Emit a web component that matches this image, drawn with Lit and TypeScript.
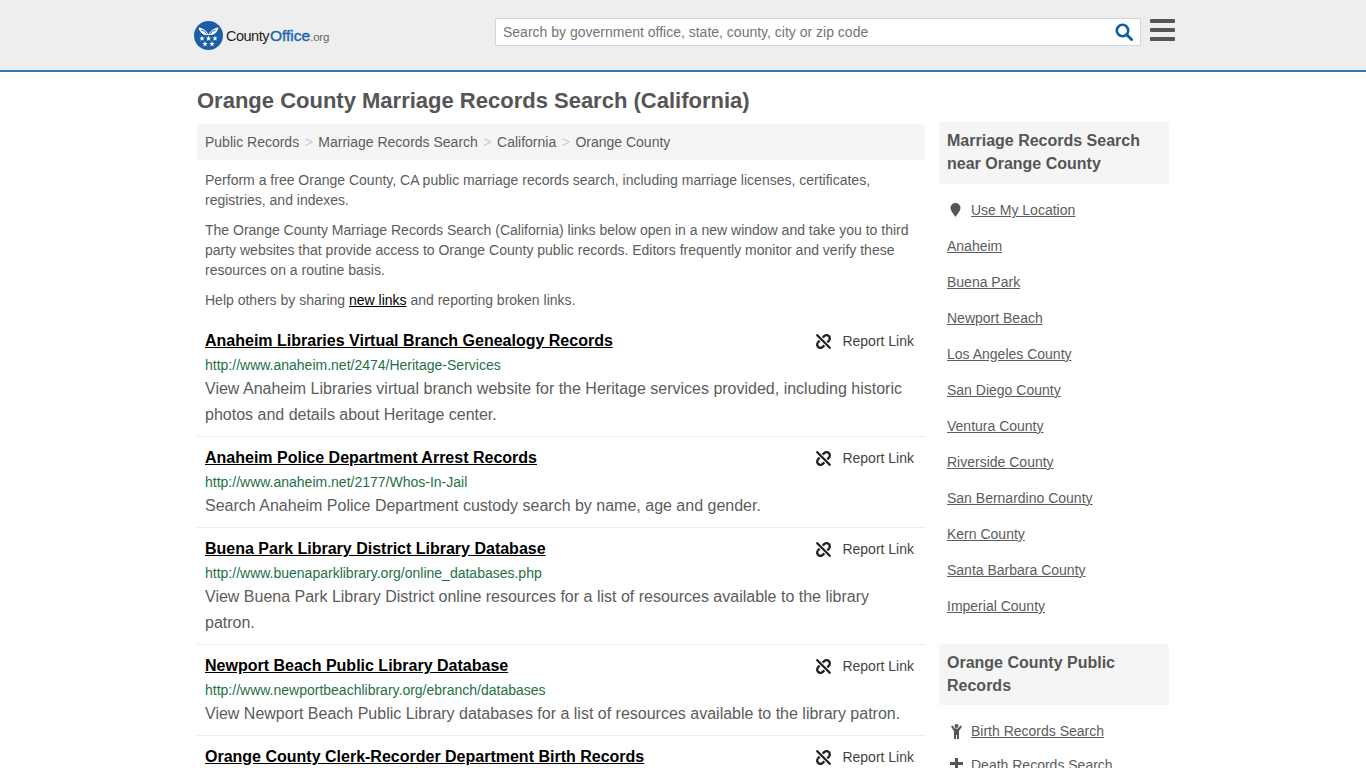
import { LitElement, html, css, svg } from "lit";
import { customElement } from "lit/decorators.js";

const UNLINK = "M304.083 405.907c4.686 4.686 4.686 12.284 0 16.971l-44.674 44.674c-59.263 59.262-155.693 59.266-214.961 0-59.264-59.265-59.264-155.696 0-214.96l44.675-44.675c4.686-4.686 12.284-4.686 16.971 0l39.598 39.598c4.686 4.686 4.686 12.284 0 16.971l-44.675 44.674c-28.072 28.073-28.072 73.75 0 101.823 28.072 28.072 73.75 28.073 101.824 0l44.674-44.674c4.686-4.686 12.284-4.686 16.971 0l39.597 39.598zm-56.568-260.216c4.686 4.686 12.284 4.686 16.971 0l44.674-44.674c28.072-28.075 73.75-28.073 101.824 0 28.072 28.073 28.072 73.75 0 101.823l-44.675 44.674c-4.686 4.686-4.686 12.284 0 16.971l39.598 39.598c4.686 4.686 12.284 4.686 16.971 0l44.675-44.675c59.265-59.265 59.265-155.695 0-214.96-59.266-59.264-155.695-59.264-214.961 0l-44.674 44.674c-4.686 4.686-4.686 12.284 0 16.971l39.597 39.598zm234.828 359.28l22.627-22.627c9.373-9.373 9.373-24.569 0-33.941L63.598 7.029c-9.373-9.373-24.569-9.373-33.941 0L7.029 29.657c-9.373 9.373-9.373 24.569 0 33.941l441.373 441.373c9.373 9.372 24.569 9.372 33.941 0z";

const star = (cx: number, cy: number, r: number) => {
  const pts: string[] = [];
  for (let i = 0; i < 10; i++) {
    const a = -Math.PI / 2 + (i * Math.PI) / 5;
    const q = i % 2 ? r * 0.42 : r;
    pts.push(`${(cx + q * Math.cos(a)).toFixed(2)},${(cy + q * Math.sin(a)).toFixed(2)}`);
  }
  return svg`<polygon points=${pts.join(" ")} fill="#fff"></polygon>`;
};

const results = [
  ["Anaheim Libraries Virtual Branch Genealogy Records", "http://www.anaheim.net/2474/Heritage-Services", "View Anaheim Libraries virtual branch website for the Heritage services provided, including historic photos and details about Heritage center."],
  ["Anaheim Police Department Arrest Records", "http://www.anaheim.net/2177/Whos-In-Jail", "Search Anaheim Police Department custody search by name, age and gender."],
  ["Buena Park Library District Library Database", "http://www.buenaparklibrary.org/online_databases.php", "View Buena Park Library District online resources for a list of resources available to the library patron."],
  ["Newport Beach Public Library Database", "http://www.newportbeachlibrary.org/ebranch/databases", "View Newport Beach Public Library databases for a list of resources available to the library patron."],
  ["Orange County Clerk-Recorder Department Birth Records", "", ""],
];
const near = ["Anaheim", "Buena Park", "Newport Beach", "Los Angeles County", "San Diego County", "Ventura County", "Riverside County", "San Bernardino County", "Kern County", "Santa Barbara County", "Imperial County"];

@customElement("app-root")
export class AppRoot extends LitElement {
  static styles = css`
    :host { display: block; height: 768px; overflow: hidden; background: #fff; font-family: "Liberation Sans", Arial, sans-serif; color: #5c5c5c; font-size: 14px; }
    a { color: inherit; }
    .header { height: 70px; background: #eee; border-bottom: 2px solid #337ab7; display: flex; justify-content: center; }
    .header-in { width: 981px; margin-left: 3px; display: flex; align-items: flex-start; }
    .logo { display: flex; align-items: center; gap: 3px; margin-top: 21px; width: 301px; height: 29px; flex: none; }
    .logo-text { font-size: 14.5px; color: #222; letter-spacing: -0.5px; white-space: nowrap; }
    .logo-text b { color: #1c66ae; font-weight: 400; font-size: 15.5px; letter-spacing: 0; -webkit-text-stroke: 0.4px #1c66ae; margin-left: 1px; }
    .logo-text span { color: #666; font-size: 11.5px; letter-spacing: -0.2px; }
    .search { margin-top: 18px; width: 646px; height: 28px; box-sizing: border-box; border: 1px solid #ccd6e0; background: #fff; display: flex; align-items: center; padding: 0 7px 0 7px; justify-content: space-between; color: #757575; flex: none; }
    .search svg { display: block; }
    .burger { margin: 19px 0 0 9px; width: 25px; display: flex; flex-direction: column; gap: 5px; }
    .burger i { display: block; height: 4px; background: #555; border-radius: 1px; }
    .wrap { width: 972px; margin: 0 auto; }
    h1 { margin: 0; padding-top: 17px; height: 35px; font-size: 22px; line-height: 24px; font-weight: 700; color: #555; }
    .cols { display: flex; gap: 14px; align-items: flex-start; }
    .main { width: 728px; flex: none; }
    .side { width: 230px; flex: none; margin-top: -2px; }
    .crumb { height: 36px; background: #f5f5f5; border-radius: 4px; display: flex; align-items: center; padding: 0 8px; box-sizing: border-box; }
    .crumb em { font-style: normal; color: #ccc; margin: 0 5.5px; }
    .intro { padding: 10px 8px 9px; }
    .intro p { margin: 0 0 10px; line-height: 20px; }
    .intro a { color: #000; }
    .item { padding: 0 8px 8px; border-bottom: 1px solid #eee; margin-bottom: 9px; }
    .item-top { display: flex; justify-content: space-between; align-items: center; height: 24px; }
    .title { font-size: 16px; font-weight: 700; color: #000; }
    .report { display: flex; align-items: center; gap: 11px; padding-right: 3px; color: #444; }
    .report svg { display: block; }
    .url { color: #1e7145; line-height: 20px; margin-top: 2px; }
    .desc { font-size: 16px; line-height: 26px; margin-top: 1px; }
    .box { background: #f5f5f5; border-radius: 2px; padding: 7px 8px 9px; font-size: 16px; font-weight: 700; line-height: 23px; color: #555; }
    .box.tight { padding-bottom: 8px; }
    .links { margin: 8px 0 20px; padding: 0 8px; list-style: none; }
    .links.compact { margin-top: 9px; }
    .links li { height: 36px; display: flex; align-items: center; }
    .links.compact li { height: 34px; }
    .links svg { width: 24px; flex: none; display: block; }
  `;

  render() {
    return html`
      <div class="header"><div class="header-in">
        <div class="logo">
          <svg width="29" height="29" viewBox="0 0 29 29" aria-hidden="true">
            <circle cx="14.500" cy="14.500" r="14.500" fill="#1a5ea8"></circle>
            <path d="M4.500 6.500c3.500.3 6.500 2 8.500 4.800l1.500 2 1.500-2c2-2.800 5-4.500 8.500-4.800-.7 3.500-3 6.500-6.600 7.500h-6.800C7.500 13 5.200 10 4.500 6.500z" fill="#fff"></path>
            <path d="M7.500 9c2.300.6 4.300 2 5.500 4M21.500 9c-2.300.6-4.300 2-5.500 4" stroke="#1a5ea8" fill="none"></path>
            ${star(8, 17.5, 2.800)}${star(14.500, 17.500, 2.800)}${star(21, 17.500, 2.800)}${star(11, 23, 2.800)}${star(18, 23, 2.800)}
          </svg>
          <div class="logo-text">County<b>Office</b><span>.org</span></div>
        </div>
        <div class="search">
          <span>Search by government office, state, county, city or zip code</span>
          <svg width="18" height="18" viewBox="0 0 18 18" aria-hidden="true"><circle cx="7.500" cy="7.500" r="5.700" fill="none" stroke="#0f5ea8" stroke-width="2.600"></circle><path d="M11.800 11.800L16.500 16.500" stroke="#0f5ea8" stroke-width="3" stroke-linecap="round"></path></svg>
        </div>
        <div class="burger"><i></i><i></i><i></i></div>
      </div></div>
      <div class="wrap">
        <h1>Orange County Marriage Records Search (California)</h1>
        <div class="cols">
          <div class="main">
            <div class="crumb">Public Records<em>&gt;</em>Marriage Records Search<em>&gt;</em>California<em>&gt;</em>Orange County</div>
            <div class="intro">
              <p>Perform a free Orange County, CA public marriage records search, including marriage licenses, certificates, registries, and indexes.</p>
              <p>The Orange County Marriage Records Search (California) links below open in a new window and take you to third party websites that provide access to Orange County public records. Editors frequently monitor and verify these resources on a routine basis.</p>
              <p>Help others by sharing <a href="#">new links</a> and reporting broken links.</p>
            </div>
            ${results.map(([t, u, d]) => html`
              <div class="item">
                <div class="item-top">
                  <a class="title" href="#">${t}</a>
                  <span class="report"><svg width="15" height="15" viewBox="0 0 512 512" aria-hidden="true"><path d=${UNLINK} fill="#222"></path></svg>Report Link</span>
                </div>
                <div class="url">${u}</div>
                <div class="desc">${d}</div>
              </div>`)}
          </div>
          <div class="side">
            <div class="box">Marriage Records Search near Orange County</div>
            <ul class="links">
              <li><svg height="14" viewBox="0 0 24 14" aria-hidden="true"><path d="M3.500 5a5 5 0 0 1 10 0c0 3-3.200 6-5 9C6.700 11 3.500 8 3.500 5z" fill="#555"></path></svg><a href="#">Use My Location</a></li>
              ${near.map((n) => html`<li><a href="#">${n}</a></li>`)}
            </ul>
            <div class="box tight">Orange County Public Records</div>
            <ul class="links compact">
              <li><svg height="15" viewBox="0 0 24 15" aria-hidden="true"><circle cx="9.500" cy="2" r="2" fill="#555"></circle><path d="M4 2.500l1.500-1L8 4.500h3l2.500-3 1.500 1L12 7v8h-2v-4H9v4H7V7z" fill="#555"></path></svg><a href="#">Birth Records Search</a></li>
              <li><svg height="15" viewBox="0 0 24 15" aria-hidden="true"><path d="M8 0h3v4h5v3h-5v8H8V7H3V4h5z" fill="#555"></path></svg><a href="#">Death Records Search</a></li>
            </ul>
          </div>
        </div>
      </div>`;
  }
}
